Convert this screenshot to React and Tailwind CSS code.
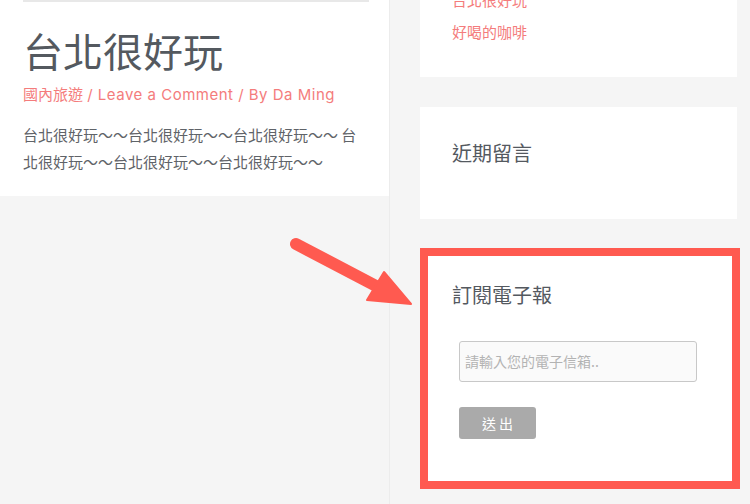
import React from "react";

const CJK = '"Noto Sans CJK TC", "Noto Sans CJK SC", sans-serif';

export default function App() {
  return (
    <div
      className="relative flex h-[504px] w-[750px] overflow-hidden bg-[#f5f5f5]"
      style={{ fontFamily: CJK }}
    >
      {/* Left column */}
      <div className="w-[390px] shrink-0 border-r border-[#ececec]">
        <div className="bg-white pl-[23px] pr-[20px] pb-[21px]">
          <div className="h-[2px] bg-[#e8e8e8]" />
          <h1 className="mt-[24px] text-[40px] leading-[48px] text-[#54595f]">台北很好玩</h1>
          <div
            className="mt-[9px] text-[15px] leading-[24px] text-[#f47c7c]"
            style={{ fontFamily: 'Inter, "Noto Sans CJK TC", sans-serif' }}
          >
            國內旅遊 <span className="tracking-[0.5px]">/ Leave a Comment / By Da Ming</span>
          </div>
          <p className="mt-[14px] text-[15px] leading-[27px] text-[#5f6368]">
            台北很好玩～～台北很好玩～～台北很好玩～～ 台北很好玩～～台北很好玩～～台北很好玩～～
          </p>
        </div>
      </div>

      {/* Right column */}
      <div className="flex flex-1 flex-col pl-[30px] pr-[13px]">
        <div className="-mt-[40px] bg-white px-[32px] pt-[24px] pb-[29px]">
          <div className="text-[15px] leading-[32px] text-[#f47c7c]">台北很好玩</div>
          <div className="text-[15px] leading-[32px] text-[#f47c7c]">好喝的咖啡</div>
        </div>

        <div className="mt-[30px] bg-white px-[32px] pt-[31px] pb-[51px]">
          <h2 className="text-[20px] leading-[30px] text-[#54595f]">近期留言</h2>
        </div>

        <div className="relative mt-[30px] bg-white px-[32px] pt-[31px] pb-[47px]">
          <h2 className="text-[20px] leading-[30px] text-[#54595f]">訂閱電子報</h2>
          <div className="mt-[31px] ml-[7px] flex h-[41px] w-[238px] items-center rounded-[3px] border border-[#c8c8c8] bg-[#fafafa] pl-[5px]">
            <span className="text-[14px] text-[#b3b3b3]">請輸入您的電子信箱..</span>
          </div>
          <div className="mt-[25px] ml-[7px] flex h-[32px] w-[77px] items-center justify-center rounded-[3px] bg-[#aaaaaa]">
            <span className="text-[14px] tracking-[3px] text-white pl-[3px]">送出</span>
          </div>
          <div className="pointer-events-none absolute -top-[1px] left-0 h-[241px] w-[320px] border-[8px] border-[#ff5a50]" />
        </div>
      </div>

      {/* Annotation arrow */}
      <svg
        className="pointer-events-none absolute left-0 top-0"
        width="750"
        height="504"
        viewBox="0 0 750 504"
      >
        <line x1="296" y1="244" x2="378" y2="287" stroke="#ff5a50" strokeWidth="12" strokeLinecap="round" />
        <polygon
          points="367,300 384,272 411,304"
          fill="#ff5a50"
          stroke="#ff5a50"
          strokeWidth="2"
          strokeLinejoin="round"
        />
      </svg>
    </div>
  );
}
